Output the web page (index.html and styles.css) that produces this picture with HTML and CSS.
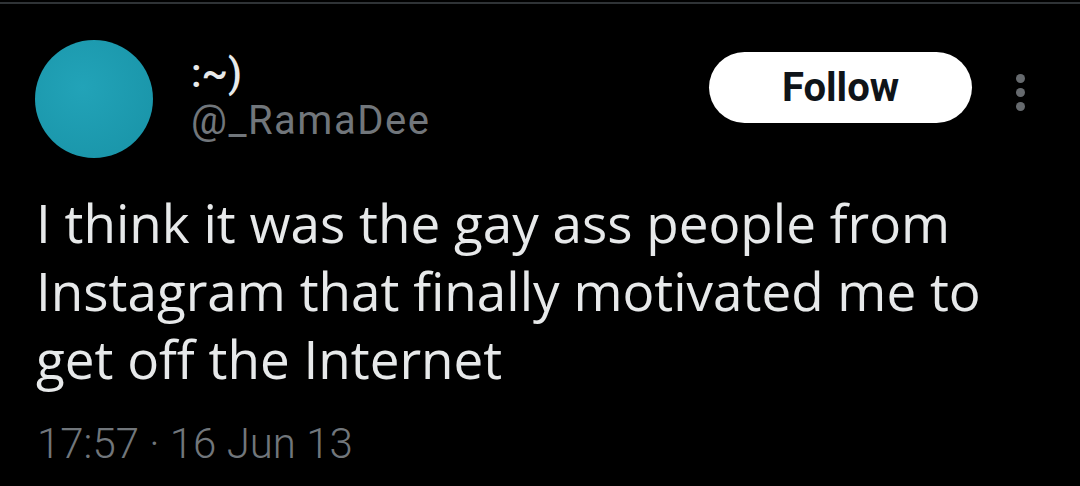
FILE: index.html
```html
<!DOCTYPE html>
<html>
<head>
<meta charset="utf-8">
<link rel="stylesheet" href="styles.css">
</head>
<body>
<div class="topline"></div>
<div class="tweet">
  <div class="header">
    <div class="avatar"></div>
    <div class="names">
      <div class="name">:~)</div>
      <div class="handle">@_RamaDee</div>
    </div>
    <button class="follow">Follow</button>
    <div class="more"><span></span><span></span><span></span></div>
  </div>
  <div class="text">I think it was the gay ass people from<br>Instagram that finally motivated me to<br>get off the Internet</div>
  <div class="time">17:57 · 16 Jun 13</div>
</div>
</body>
</html>
```
FILE: styles.css
```css
html, body { margin: 0; padding: 0; background: #000; }
body { width: 1080px; height: 486px; overflow: hidden; font-family: Roboto, "Liberation Sans", sans-serif; }
.topline { height: 2px; margin-top: 2px; background: #2f3336; }
.tweet { padding: 36px 0 0 35px; }
.header { display: flex; align-items: flex-start; }
.avatar { width: 118px; height: 118px; border-radius: 50%; background: radial-gradient(circle at 40% 40%, #22a3b8, #1892a6); flex: none; }
.names { margin-left: 38px; margin-top: 12px; flex: 1; }
.name { color: #e7e9ea; font-size: 40px; font-weight: 500; line-height: 44px; }
.handle { color: #71767b; font-size: 40px; font-weight: 400; letter-spacing: 1.5px; line-height: 50px; }
.follow { margin-top: 12px; width: 263px; height: 71px; border: none; border-radius: 36px; background: #fff; color: #0f1419; font-family: Roboto, sans-serif; font-weight: bold; font-size: 40px; padding: 0; }
.more { display: flex; flex-direction: column; gap: 5px; margin: 34px 55px 0 44px; }
.more span { width: 9px; height: 9px; border-radius: 50%; background: #666a6e; }
.text { margin-top: 31px; color: #e7e9ea; font-family: "Open Sans", sans-serif; font-size: 53px; line-height: 68px; margin-left: 1px; }
.time { margin-top: 26px; color: #71767b; font-size: 42px; font-weight: 300; line-height: 50px; margin-left: 2px; }
```
